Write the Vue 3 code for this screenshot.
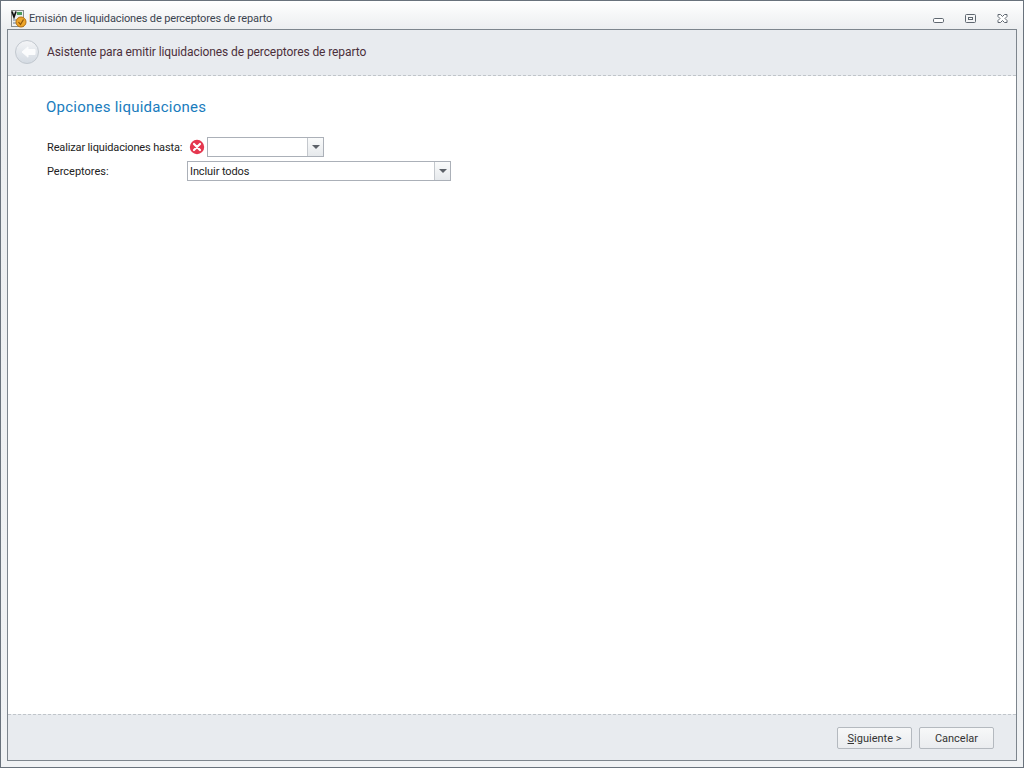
<script setup>
</script>
<template>
  <div class="window">
    <div class="titlebar">
      <svg class="appicon" width="18" height="18" viewBox="0 0 18 18">
        <rect x="2.5" y="0.5" width="12" height="16" fill="#eef0f0" stroke="#8a8f8c"/>
        <rect x="8" y="2" width="5" height="3" fill="#4d9a5a"/>
        <path d="M3 1.5 L5 7 L7 1.5" fill="none" stroke="#111" stroke-width="1.7"/>
        <rect x="4" y="9" width="3" height="2" fill="#a9b6c4"/>
        <rect x="4" y="12" width="3" height="2" fill="#a9b6c4"/>
        <circle cx="12" cy="12" r="5" fill="#eda52a" stroke="#b4700f"/>
        <path d="M9.5 12 L11.5 14.5 L14.5 9.5" fill="none" stroke="#8a5208" stroke-width="1.2"/>
      </svg>
      <span class="title">Emisión de liquidaciones de perceptores de reparto</span>
      <div class="controls">
        <svg width="12" height="12" viewBox="0 0 12 12"><rect x="0.5" y="4.5" width="10" height="4" rx="1.2" fill="#fff" stroke="#5f6770"/></svg>
        <svg width="12" height="12" viewBox="0 0 12 12"><rect x="0.5" y="0.5" width="10" height="8" rx="1" fill="#f4f5f6" stroke="#5f6770"/><rect x="3.5" y="3.5" width="4" height="2" fill="#fff" stroke="#5f6770"/></svg>
        <svg width="12" height="12" viewBox="0 0 12 12"><path d="M1 .5 H3.5 L5.5 2.5 L7.5 .5 H10 V2.5 L8 4.5 L10 6.5 V8.5 H7.5 L5.5 6.5 L3.5 8.5 H1 V6.5 L3 4.5 L1 2.5 Z" fill="#fff" stroke="#5f6770"/></svg>
      </div>
    </div>
    <div class="frame">
      <header class="head">
        <svg class="back" width="26" height="26" viewBox="0 0 26 26">
          <defs>
            <linearGradient id="bk" x1="0" y1="0" x2="0" y2="1">
              <stop offset="0" stop-color="#f4f5f7"/><stop offset="1" stop-color="#d3dae2"/>
            </linearGradient>
          </defs>
          <circle cx="13" cy="13" r="11.5" fill="url(#bk)" stroke="#c2c8cf"/>
          <path d="M8 13 L14 7.8 V10.5 H21 V15.5 H14 V18.2 Z" fill="#fbfcfd" stroke="#fbfcfd" stroke-width="1" stroke-linejoin="round"/>
        </svg>
        <span class="headtext">Asistente para emitir liquidaciones de perceptores de reparto</span>
      </header>
      <main class="content">
        <h1 class="heading">Opciones liquidaciones</h1>
        <div class="row row1">
          <label class="label">Realizar liquidaciones hasta:</label>
          <svg class="err" width="16" height="16" viewBox="0 0 16 16">
            <circle cx="8" cy="8" r="7.2" fill="#e5374f"/>
            <path d="M5 5 L11 11 M11 5 L5 11" stroke="#fff" stroke-width="2.2" stroke-linecap="round"/>
          </svg>
          <div class="combo short">
            <span class="val"></span>
            <span class="arrowbtn"><i class="tri"></i></span>
          </div>
        </div>
        <div class="row row2">
          <label class="label wide">Perceptores:</label>
          <div class="combo long">
            <span class="val">Incluir todos</span>
            <span class="arrowbtn"><i class="tri"></i></span>
          </div>
        </div>
      </main>
      <footer class="foot">
        <button class="btn"><span><u>S</u>iguiente &gt;</span></button>
        <button class="btn"><span>Cancelar</span></button>
      </footer>
    </div>
  </div>
</template>
<style>
html, body { margin: 0; padding: 0; }
</style>
<style scoped>
.window {
  width: 1024px;
  height: 768px;
  box-sizing: border-box;
  display: flex;
  flex-direction: column;
  border: 1px solid #69727c;
  background: linear-gradient(#ffffff 0, #eceef0 28px, #f0f2f4 100%);
  font-family: Roboto, "Open Sans", sans-serif;
  font-size: 11px;
  color: #222;
  padding: 0 6px 6px;
  overflow: hidden;
}
.titlebar {
  height: 28px;
  flex: none;
  display: flex;
  align-items: center;
  box-sizing: border-box;
  padding: 7px 0 0 2px;
}
.appicon { margin-right: 2px; }
.title { font-size: 11px; letter-spacing: -0.14px; color: #3b4450; }
.controls {
  margin-left: auto;
  display: flex;
  gap: 20px;
  margin-right: 8px;
  margin-top: 2px;
}
.frame {
  flex: 1;
  display: flex;
  flex-direction: column;
  border: 1px solid #7d858d;
  background: #fff;
  min-height: 0;
}
.head {
  height: 46px;
  flex: none;
  box-sizing: border-box;
  display: flex;
  align-items: center;
  padding: 0 0 2px 6px;
  background: #e8ebef;
  border-bottom: 1px dashed #c0c5ca;
}
.back { margin-right: 7px; }
.headtext { font-size: 12px; letter-spacing: -0.09px; color: #4b2f3a; }
.content {
  flex: 1;
  padding: 0 38px;
}
.heading {
  margin: 21px 0 0;
  font-size: 15px;
  line-height: 20px;
  font-weight: 400;
  letter-spacing: 0.24px;
  color: #1a7cbd;
}
.row { display: flex; align-items: center; }
.row1 { margin-top: 20px; height: 20px; }
.row2 { margin-top: 4px; height: 20px; }
.label { width: 136px; flex: none; padding-left: 1px; letter-spacing: -0.14px; color: #222; white-space: nowrap; }
.label.wide { width: 140px; letter-spacing: 0; }
.err { margin-left: 6px; margin-right: 2px; flex: none; }
.combo {
  box-sizing: border-box;
  height: 20px;
  display: flex;
  border: 1px solid #abb0b8;
  background: #fff;
}
.short { width: 117px; }
.long { width: 264px; }
.val { flex: 1; padding-left: 2px; line-height: 19px; letter-spacing: -0.1px; color: #222; }
.arrowbtn {
  width: 15px;
  display: flex;
  align-items: center;
  justify-content: center;
  border-left: 1px solid #c4c8cd;
  background: linear-gradient(#fafbfb, #e6e9ec);
}
.tri {
  display: block;
  width: 0;
  height: 0;
  border-left: 4px solid transparent;
  border-right: 4px solid transparent;
  border-top: 4px solid #5c6168;
}
.foot {
  height: 46px;
  flex: none;
  box-sizing: border-box;
  display: flex;
  justify-content: flex-end;
  align-items: flex-start;
  gap: 7px;
  padding: 12px 22px 0 0;
  background: #e8ebef;
  border-top: 1px dashed #c0c5ca;
}
.btn {
  width: 75px;
  height: 22px;
  padding: 0;
  border: 1px solid #b4b9bf;
  border-radius: 2px;
  background: linear-gradient(#f7f8f9, #eaecef);
  font: inherit;
  color: #333;
}
</style>
